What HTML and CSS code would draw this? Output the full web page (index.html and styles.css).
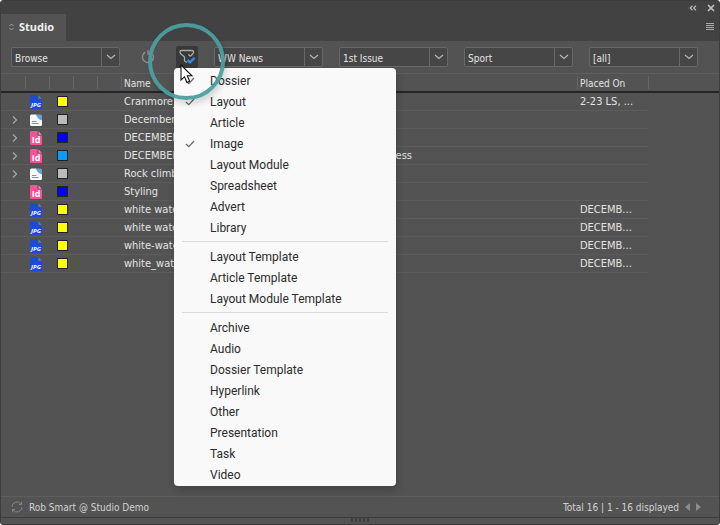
FILE: index.html
```html
<!DOCTYPE html>
<html lang="en">
<head>
<meta charset="utf-8">
<title>Studio</title>
<link rel="stylesheet" href="styles.css">
</head>
<body>
<svg class="sprite" aria-hidden="true">
  <symbol id="jpg" viewBox="0 0 12 14">
    <path fill="#1d4bd8" d="M1.500 0H7.500V3.500Q7.500 4.500 8.500 4.500H12V12.500Q12 14 10.500 14H1.500Q0 14 0 12.500V1.500Q0 0 1.500 0Z"/>
    <path fill="#4a7cf0" d="M8.500 .3 11.700 3.700H8.500Z"/>
  </symbol>
  <symbol id="indd" viewBox="0 0 12 14">
    <path fill="#ff4f98" d="M1.500 0H7.500V3.500Q7.500 4.500 8.500 4.500H12V12.500Q12 14 10.500 14H1.500Q0 14 0 12.500V1.500Q0 0 1.500 0Z"/>
    <path fill="#ff8abb" d="M8.500 .3 11.700 3.700H8.500Z"/>
  </symbol>
  <symbol id="dossier" viewBox="0 0 12 14">
    <path fill="#f6f8fa" d="M1.500 1.500H6L12 7V11.500Q12 13 10.500 13H1.500Q0 13 0 11.500V3Q0 1.500 1.500 1.500Z"/>
    <path fill="#6c9fd4" d="M6 1.500H10.500Q12 1.500 12 3V7.500Q7.500 6.500 6 1.500Z"/>
    <path stroke="#8a929b" d="M2 8.500H6.500M2 10.500H8.500"/>
  </symbol>
  <symbol id="down" viewBox="0 0 10 6"><path fill="none" stroke="#b8b8b8" stroke-width="1.200" d="M1 1 5 4.500 9 1"/></symbol>
  <symbol id="right" viewBox="0 0 6 10"><path fill="none" stroke="#a8a8a8" stroke-width="1.200" d="M1 1.500 4.500 5 1 8.500"/></symbol>
  <symbol id="tick" viewBox="0 0 10 8"><path fill="none" stroke="#666" stroke-width="1.200" d="M1 4 3.800 6.700 9 1"/></symbol>
</svg>

<main class="panel">
  <header class="titlebar">
    <button class="bare" aria-label="Collapse"><svg width="8" height="6" viewBox="0 0 8 6"><path fill="none" stroke="#bbb" stroke-width="1.200" d="M3.500 .8 1.200 3 3.500 5.200M7 .8 4.700 3 7 5.200"/></svg></button>
    <button class="bare" aria-label="Close"><svg width="8" height="8" viewBox="0 0 8 8"><path stroke="#c4c4c4" stroke-width="1.600" d="M1 1 7 7M7 1 1 7"/></svg></button>
  </header>

  <nav class="tabs">
    <button class="tab"><svg width="5" height="8" viewBox="0 0 5 8"><path fill="none" stroke="#aaa" stroke-width=".9" d="M.5 3 2.500 1 4.500 3M.5 5 2.500 7 4.500 5"/></svg>Studio</button>
    <button class="bare" aria-label="Panel menu"><svg width="8" height="7" viewBox="0 0 8 7"><path stroke="#aaa" d="M0 .5H8M0 2.500H8M0 4.500H8M0 6.500H8"/></svg></button>
  </nav>

  <section class="toolbar">
    <div class="combo"><select aria-label="Mode"><option>Browse</option></select><svg class="arrow"><use href="#down"/></svg></div>
    <div class="tools">
      <button class="bare refresh" aria-label="Refresh"><svg width="14" height="14" viewBox="0 0 14 14"><path fill="none" stroke="#8c8c8c" stroke-width="1.400" d="M4.500 2.100A5.500 5.500 0 1 0 11.500 4"/><path fill="none" stroke="#8c8c8c" stroke-width="1.300" d="M7 0V4.200L11 2.200"/></svg></button>
      <div class="filter">
        <button class="filter-button" aria-label="Filter by type" aria-expanded="true"><svg width="18" height="18" viewBox="0 0 18 18"><path fill="none" stroke="#a9a9a9" stroke-width="1.300" d="M9 14.500 6.500 13V9L2.500 5.500Q1 2.500 3.500 2.500H13.500Q16.500 2.500 15.200 5.300L13 7.800Q11 8.500 10.700 6.200"/><path fill="none" stroke="#2d8ceb" stroke-width="2.400" d="M9.500 12 12 14.300 16.500 9.800"/></svg></button>
        <div class="menu" role="menu">
          <button class="item checked" role="menuitem"><svg><use href="#tick"/></svg>Dossier</button>
          <button class="item checked" role="menuitem"><svg><use href="#tick"/></svg>Layout</button>
          <button class="item" role="menuitem">Article</button>
          <button class="item checked" role="menuitem"><svg><use href="#tick"/></svg>Image</button>
          <button class="item" role="menuitem">Layout Module</button>
          <button class="item" role="menuitem">Spreadsheet</button>
          <button class="item" role="menuitem">Advert</button>
          <button class="item" role="menuitem">Library</button>
          <hr>
          <button class="item" role="menuitem">Layout Template</button>
          <button class="item" role="menuitem">Article Template</button>
          <button class="item" role="menuitem">Layout Module Template</button>
          <hr>
          <button class="item" role="menuitem">Archive</button>
          <button class="item" role="menuitem">Audio</button>
          <button class="item" role="menuitem">Dossier Template</button>
          <button class="item" role="menuitem">Hyperlink</button>
          <button class="item" role="menuitem">Other</button>
          <button class="item" role="menuitem">Presentation</button>
          <button class="item" role="menuitem">Task</button>
          <button class="item" role="menuitem">Video</button>
        </div>
        <div class="ring"></div>
        <svg class="cursor" viewBox="0 0 13 20"><path fill="#fff" stroke="#10101c" stroke-width="1.100" d="M1 1V16L4.500 12.800 7 18.500 9.700 17.300 7.300 11.800H12Z"/></svg>
      </div>
    </div>
    <div class="combo"><select aria-label="Brand"><option>WW News</option></select><svg class="arrow"><use href="#down"/></svg></div>
    <div class="combo"><select aria-label="Issue"><option>1st Issue</option></select><svg class="arrow"><use href="#down"/></svg></div>
    <div class="combo"><select aria-label="Category"><option>Sport</option></select><svg class="arrow"><use href="#down"/></svg></div>
    <div class="combo"><select aria-label="Status"><option>[all]</option></select><svg class="arrow"><use href="#down"/></svg></div>
  </section>

  <section class="content">
    <table>
      <colgroup><col class="c-slim"><col class="c-slim"><col class="c-slim"><col class="c-slim"><col class="c-slim"><col><col class="c-placed"><col class="c-rest"></colgroup>
      <thead><tr><th></th><th></th><th></th><th></th><th></th><th>Name</th><th>Placed On</th><th></th></tr></thead>
      <tbody>
        <tr><td></td><td><svg class="file" viewBox="0 0 12 14"><use href="#jpg"/><text x="6" y="12" class="tag-jpg">JPG</text></svg></td><td><i class="chip yellow"></i></td><td></td><td></td><td>Cranmore_</td><td>2-23 LS, ...</td></tr>
        <tr><td><svg class="more"><use href="#right"/></svg></td><td><svg class="file"><use href="#dossier"/></svg></td><td><i class="chip grey"></i></td><td></td><td></td><td>December</td><td></td></tr>
        <tr><td><svg class="more"><use href="#right"/></svg></td><td><svg class="file" viewBox="0 0 12 14"><use href="#indd"/><text x="6" y="12" class="tag-id">Id</text></svg></td><td><i class="chip blue"></i></td><td></td><td></td><td>DECEMBER</td><td></td></tr>
        <tr><td><svg class="more"><use href="#right"/></svg></td><td><svg class="file" viewBox="0 0 12 14"><use href="#indd"/><text x="6" y="12" class="tag-id">Id</text></svg></td><td><i class="chip sky"></i></td><td></td><td></td><td><div class="long"><span>DECEMBER</span><span>ess</span></div></td><td></td></tr>
        <tr><td><svg class="more"><use href="#right"/></svg></td><td><svg class="file"><use href="#dossier"/></svg></td><td><i class="chip grey"></i></td><td></td><td></td><td>Rock climb</td><td></td></tr>
        <tr><td></td><td><svg class="file" viewBox="0 0 12 14"><use href="#indd"/><text x="6" y="12" class="tag-id">Id</text></svg></td><td><i class="chip blue"></i></td><td></td><td></td><td>Styling</td><td></td></tr>
        <tr><td></td><td><svg class="file" viewBox="0 0 12 14"><use href="#jpg"/><text x="6" y="12" class="tag-jpg">JPG</text></svg></td><td><i class="chip yellow"></i></td><td></td><td></td><td>white water</td><td>DECEMB...</td></tr>
        <tr><td></td><td><svg class="file" viewBox="0 0 12 14"><use href="#jpg"/><text x="6" y="12" class="tag-jpg">JPG</text></svg></td><td><i class="chip yellow"></i></td><td></td><td></td><td>white water</td><td>DECEMB...</td></tr>
        <tr><td></td><td><svg class="file" viewBox="0 0 12 14"><use href="#jpg"/><text x="6" y="12" class="tag-jpg">JPG</text></svg></td><td><i class="chip yellow"></i></td><td></td><td></td><td>white-water</td><td>DECEMB...</td></tr>
        <tr><td></td><td><svg class="file" viewBox="0 0 12 14"><use href="#jpg"/><text x="6" y="12" class="tag-jpg">JPG</text></svg></td><td><i class="chip yellow"></i></td><td></td><td></td><td>white_water</td><td>DECEMB...</td></tr>
      </tbody>
    </table>
  </section>

  <footer class="status">
    <svg width="12" height="12" viewBox="0 0 12 12"><path fill="none" stroke="#858585" d="M1 6A5 5 0 0 1 10 3M11 6A5 5 0 0 1 2 9M10.500 .8V3.500H8M1.500 11.200V8.500H4"/></svg>
    <span>Rob Smart @ Studio Demo</span>
    <span class="total">Total 16 | 1 - 16 displayed</span>
    <button class="bare" aria-label="Previous"><svg width="5" height="8" viewBox="0 0 5 8"><path fill="#8c8c8c" d="M5 0V8L0 4Z"/></svg></button>
    <button class="bare" aria-label="Next"><svg width="5" height="8" viewBox="0 0 5 8"><path fill="#8c8c8c" d="M0 0V8L5 4Z"/></svg></button>
  </footer>
  <div class="grip"><span></span></div>
</main>
</body>
</html>
```
FILE: styles.css
```css
* { box-sizing: border-box; }
html { background: #fff; }
body {
  margin: 0;
  color: #e4e4e4;
  font-family: "DejaVu Sans Condensed", "DejaVu Sans", sans-serif;
  font-size: 10px;
}
button, select { font: inherit; color: inherit; margin: 0; }
svg { display: block; }
.sprite { position: absolute; width: 0; height: 0; }
.tag-jpg, .tag-id { text-anchor: middle; fill: #fff; }
.tag-jpg { font: italic bold 6px "Open Sans", sans-serif; }
.tag-id { font: bold 9px "Open Sans", sans-serif; }

.panel {
  min-height: 100vh;
  display: flex;
  flex-direction: column;
  overflow: hidden;
  background: #535353;
  border: 1px solid #3c3c3c;
  border-radius: 3px;
}
.bare { padding: 0; border: 0; background: none; }

.titlebar {
  height: 13px;
  display: flex;
  justify-content: flex-end;
  align-items: center;
  gap: 10px;
  padding-right: 4px;
  background: #424242;
}
.tabs {
  height: 27px;
  display: flex;
  justify-content: space-between;
  padding-right: 5px;
  background: #424242;
}
.tabs .bare { padding-bottom: 3px; }
.tab {
  display: flex;
  align-items: center;
  gap: 5px;
  padding: 0 12px 2px 8px;
  border: 0;
  background: #535353;
  color: #f0f0f0;
  font: bold 11px "Noto Sans", sans-serif;
}

.toolbar {
  height: 33px;
  display: flex;
  align-items: center;
  gap: 16px;
  padding: 0 21px 0 10px;
  border-bottom: 1px solid #5e5e5e;
}
.combo { position: relative; flex: 1; }
.combo select {
  display: block;
  appearance: none;
  width: 100%;
  height: 20px;
  padding: 2px 20px 0 3px;
  border: 1px solid #686868;
  border-radius: 2px;
  background: linear-gradient(#686868, #686868) right 17px top / 1px 100% no-repeat #464646;
}
.arrow {
  position: absolute;
  top: 7px;
  right: 4px;
  width: 10px;
  height: 6px;
  pointer-events: none;
}
.tools { display: flex; align-items: center; gap: 21px; padding-left: 5px; }
.filter { position: relative; }
.filter-button {
  display: flex;
  align-items: center;
  justify-content: center;
  width: 22px;
  height: 22px;
  padding: 0;
  border: 0;
  border-radius: 2px;
  background: #383838;
}

.menu {
  position: absolute;
  z-index: 2;
  top: 100%;
  left: -2px;
  width: 222px;
  padding: 2px 0 1px;
  border-radius: 4px;
  background: #f9f9f9;
  box-shadow: 1px 4px 8px rgba(0, 0, 0, .2);
}
.item {
  display: flex;
  align-items: center;
  width: 100%;
  height: 21px;
  padding: 1px 12px 0 36px;
  border: 0;
  background: none;
  color: #2b2b2b;
  font: 12px Roboto, sans-serif;
}
.item.checked { padding-left: 11px; gap: 15px; }
.item svg { width: 10px; height: 8px; }
.menu hr {
  height: 1px;
  margin: 3px 8px 4px;
  border: 0;
  background: #dcdcdc;
}
.ring {
  position: absolute;
  z-index: 3;
  top: -23px;
  left: -28px;
  width: 77px;
  height: 77px;
  border: 4px solid rgba(75, 158, 160, .95);
  border-radius: 50%;
  box-shadow: 2px 4px 6px rgba(0, 0, 0, .15);
  pointer-events: none;
}
.cursor {
  position: absolute;
  z-index: 4;
  top: 18px;
  left: 4px;
  width: 13px;
  height: 20px;
}

.content { flex: 1; }
table {
  width: 100%;
  table-layout: fixed;
  border-collapse: separate;
  border-spacing: 0;
}
.c-slim { width: 24px; }
.c-placed { width: 71px; }
.c-rest { width: 71px; }
th, td {
  height: 18px;
  padding: 1px 3px 0;
  line-height: 16px;
  text-align: left;
  font-weight: normal;
  white-space: nowrap;
}
th {
  height: 19px;
  padding-top: 2px;
  line-height: 15px;
  border-bottom: 2px solid #252525;
  background: linear-gradient(#666, #666) left 2px / 1px 13px no-repeat;
}
th:first-child { background: none; }
td { border-bottom: 1px solid #5c5c5c; font-size: 11px; }
.file { width: 12px; height: 14px; margin-left: 2px; }
.more { width: 6px; height: 10px; margin-left: 8px; }
.chip {
  display: block;
  width: 11px;
  height: 11px;
  margin: 0 0 1px 5px;
  border: 1px solid #222;
}
.yellow { background: #ff0; }
.grey { background: #bbb; }
.blue { background: #00f; }
.sky { background: #0d99ff; }
.long { width: 288px; display: flex; justify-content: space-between; }

.status {
  height: 22px;
  display: flex;
  align-items: center;
  gap: 6px;
  padding: 0 18px 0 10px;
  border-top: 1px solid #5e5e5e;
  border-bottom: 1px solid #3c3c3c;
  color: #d2d2d2;
}
.total {
  width: 116px;
  margin-left: auto;
  overflow: hidden;
  white-space: nowrap;
}
.grip { height: 6px; display: flex; justify-content: center; }
.grip span {
  width: 19px;
  height: 4px;
  background: repeating-linear-gradient(90deg, #3e3e3e 0 2px, #535353 2px 4px);
}
```
